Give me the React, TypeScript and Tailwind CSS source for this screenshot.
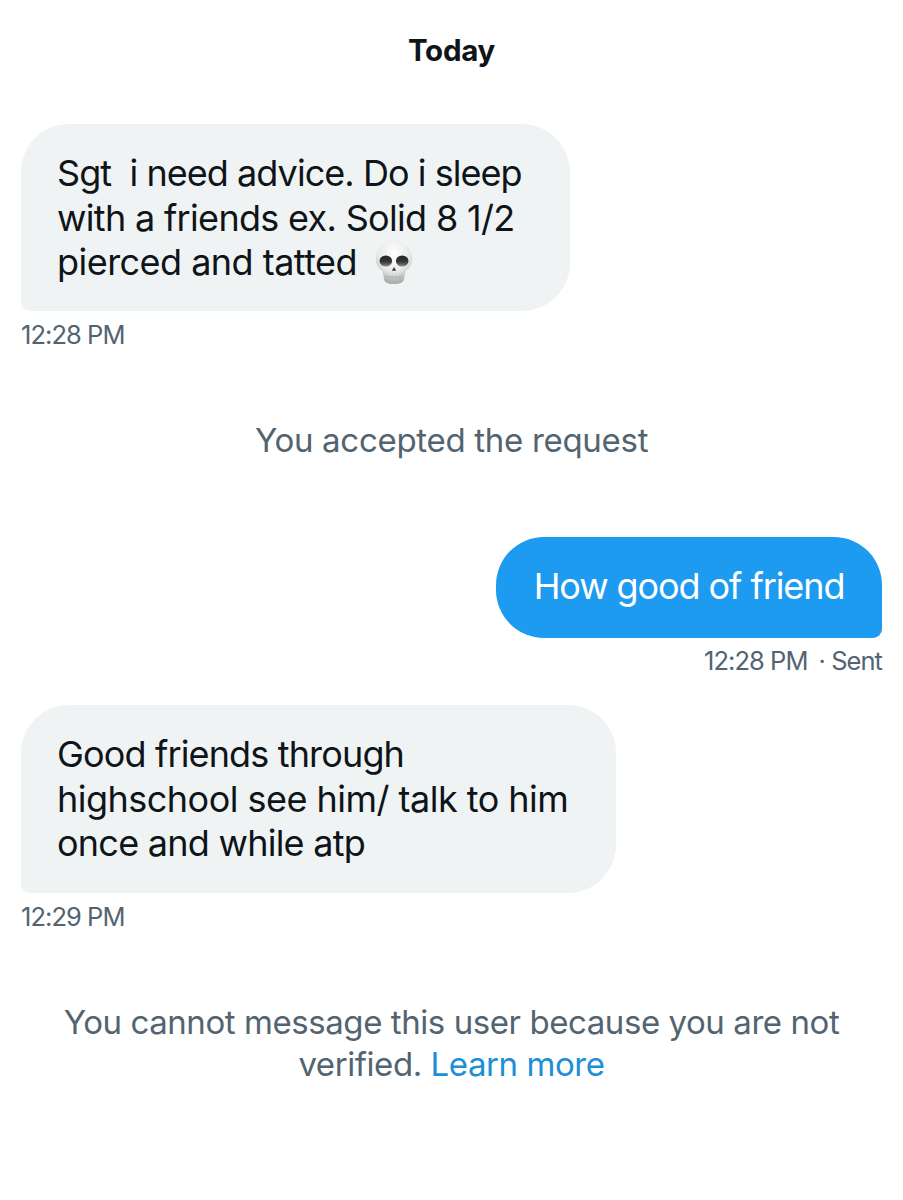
import React from 'react';

const Skull = () => (
  <svg viewBox="0 0 40 44" className="inline-block w-[40px] h-[44px] ml-[17px] align-[-10px]">
    <defs>
      <radialGradient id="skullShade" cx="50%" cy="26%" r="74%">
        <stop offset="0%" stopColor="#ffffff" />
        <stop offset="60%" stopColor="#e8e9e9" />
        <stop offset="100%" stopColor="#a4a6a6" />
      </radialGradient>
      <linearGradient id="eyeShade" x1="0" y1="0" x2="0" y2="1">
        <stop offset="0%" stopColor="#242424" />
        <stop offset="55%" stopColor="#363636" />
        <stop offset="100%" stopColor="#8a8a8a" />
      </linearGradient>
    </defs>
    <path
      d="M20 1C9 1 2 8 2 18c0 6 2.500 9.500 6.500 12l1.500 8c.5 3.500 3.500 5 10 5s9.500-1.500 10-5l1.500-8c4-2.500 6.500-6 6.500-12C38 8 31 1 20 1z"
      fill="url(#skullShade)"
    />
    <ellipse cx="11.800" cy="20" rx="6.300" ry="5.600" fill="url(#eyeShade)" />
    <ellipse cx="28.200" cy="20" rx="6.300" ry="5.600" fill="url(#eyeShade)" />
    <path d="M20 26l2.200 3.800h-4.400z" fill="#3a3a3a" />
    <path d="M14 35v6.500M18 36v7M22 36v7M26 35v6.500" stroke="#b2b2b2" strokeWidth="1" />
    <path d="M11 35c5 1.500 13 1.500 18 0" stroke="#b2b2b2" strokeWidth="1" fill="none" />
  </svg>
);

const Stamp = ({ children }: { children: React.ReactNode }) => (
  <p className="text-[25.500px] leading-[32px] tracking-[-0.95px] text-[#536471] whitespace-pre">{children}</p>
);

export default function App() {
  return (
    <div
      className="w-[903px] h-[1200px] bg-white flex flex-col px-[21px] pt-[30px] overflow-hidden"
      style={{ fontFamily: 'Inter, "Liberation Sans", sans-serif' }}
    >
      {/* Date */}
      <p className="text-center text-[29.500px] leading-[40px] font-bold text-[#0f1419] tracking-[-0.3px]">Today</p>

      {/* First message */}
      <div className="mt-[54px] w-[549px] h-[187px] bg-[#eff3f4] rounded-[48px] rounded-bl-[9px] pl-[36px] pt-[27px]">
        <div className="text-[36px] leading-[44.500px] text-[#0f1419] whitespace-pre">
          <p className="tracking-[-0.95px]">Sgt  i need advice. Do i sleep</p>
          <p className="tracking-[-0.68px]">with a friends ex. Solid 8 1/2</p>
          <p className="tracking-[-0.53px]">
            pierced and tatted
            <Skull />
          </p>
        </div>
      </div>
      <div className="mt-[8px]"><Stamp>12:28 PM</Stamp></div>

      <p className="mt-[67px] text-center text-[33px] leading-[44px] tracking-[-0.3px] text-[#536471]">You accepted the request</p>

      {/* Sent */}
      <div className="mt-[75px] self-end w-[386px] h-[101px] bg-[#1d9bf0] rounded-[48px] rounded-br-[9px] flex items-center justify-center pb-[4px]">
        <p className="text-[36px] leading-[44px] tracking-[-1.08px] text-white whitespace-pre">How good of friend</p>
      </div>
      <div className="mt-[7px] self-end flex gap-[11px]">
        <Stamp>12:28 PM</Stamp>
        <Stamp>· Sent</Stamp>
      </div>

      {/* Reply */}
      <div className="mt-[28px] w-[595px] h-[188px] bg-[#eff3f4] rounded-[48px] rounded-bl-[9px] pl-[36px] pt-[27px]">
        <div className="text-[36px] leading-[44.500px] text-[#0f1419] whitespace-pre">
          <p className="tracking-[-0.85px]">Good friends through</p>
          <p className="tracking-[-0.52px]">highschool see him/ talk to him</p>
          <p className="tracking-[-0.75px]">once and while atp</p>
        </div>
      </div>
      <div className="mt-[8px]"><Stamp>12:29 PM</Stamp></div>

      {/* Notice */}
      <p className="mt-[68px] text-center text-[33px] leading-[42px] tracking-[-0.43px] text-[#536471]">
        You cannot message this user because you are not
        <br />
        verified. <span className="text-[#1d8fd6]">Learn more</span>
      </p>
    </div>
  );
}
